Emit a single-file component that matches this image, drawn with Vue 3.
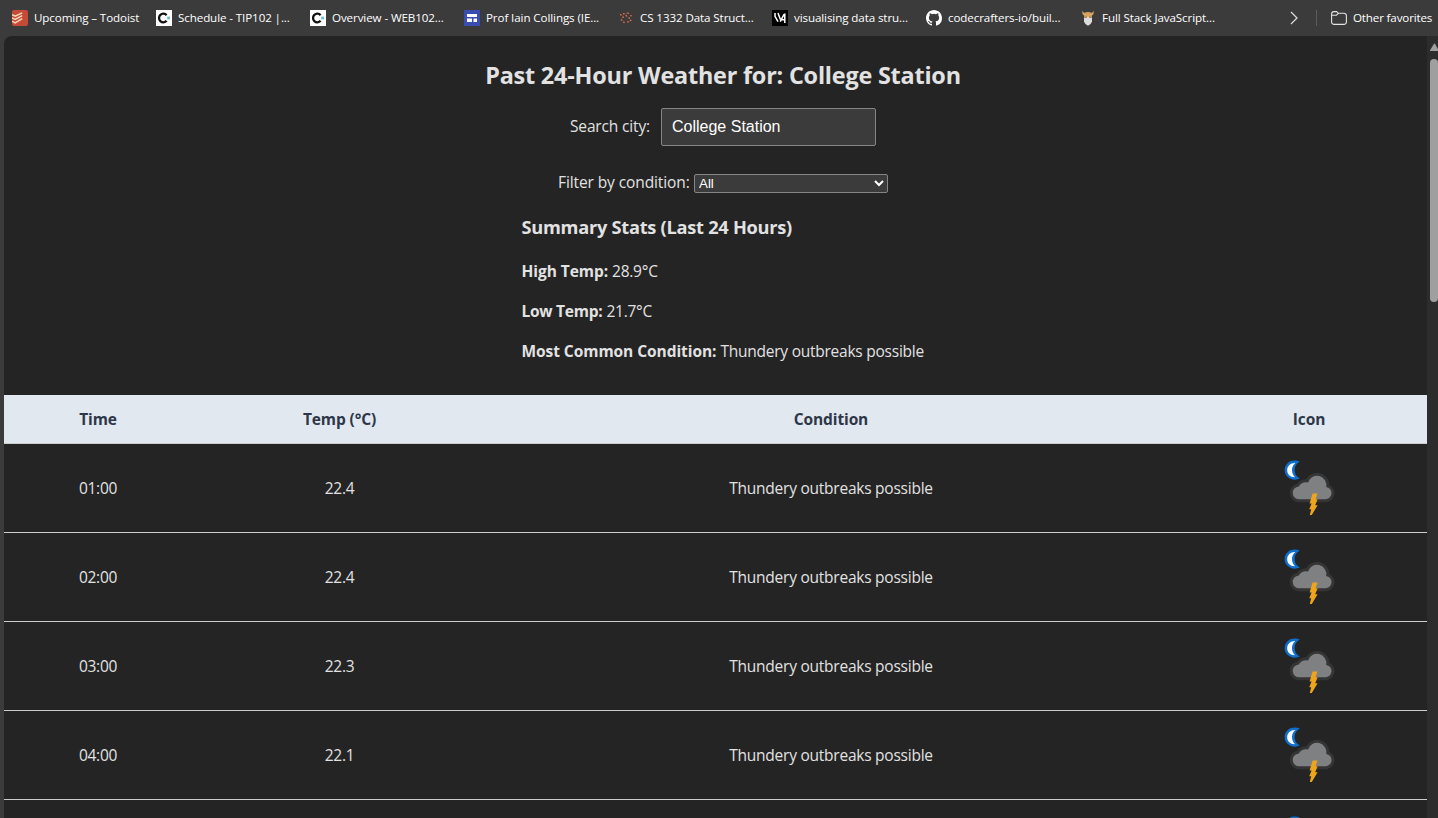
<script setup>
import { ref } from 'vue'

const bookmarks = [
  { icon: 'todoist', label: 'Upcoming – Todoist' },
  { icon: 'codepath', label: 'Schedule - TIP102 |...' },
  { icon: 'codepath', label: 'Overview - WEB102...' },
  { icon: 'sites', label: 'Prof Iain Collings (IE...' },
  { icon: 'dots', label: 'CS 1332 Data Struct...' },
  { icon: 'visualgo', label: 'visualising data stru...' },
  { icon: 'github', label: 'codecrafters-io/buil...' },
  { icon: 'viking', label: 'Full Stack JavaScript...' },
]
const city = ref('College Station')
const condition = ref('All')
const outlook = 'Thundery outbreaks possible'
const hours = [
  { time: '01:00', temp: '22.4', outlook },
  { time: '02:00', temp: '22.4', outlook },
  { time: '03:00', temp: '22.3', outlook },
  { time: '04:00', temp: '22.1', outlook },
  { time: '', temp: '', outlook: '' },
]
const stats = [
  { name: 'High Temp:', value: '28.9°C', key: 'high' },
  { name: 'Low Temp:', value: '21.7°C', key: 'low' },
  { name: 'Most Common Condition:', value: outlook, key: 'common' },
]
</script>

<template>
  <div class="window">
    <nav class="bookmarks">
      <div v-for="b in bookmarks" :key="b.label" class="bookmark" :class="b.icon">
        <svg v-if="b.icon === 'todoist'" viewBox="0 0 16 16">
          <rect width="16" height="16" rx="2" fill="#c74a38" />
          <path d="M0 4.6 3.2 6.2 10.2 2.8M0 7.9 3.2 9.5 10.2 5.6M0 11.2 3.2 12.8 10.2 8.6" fill="none" stroke="#f3d9b8" stroke-width="1.5" />
        </svg>
        <svg v-else-if="b.icon === 'codepath'" viewBox="0 0 16 16">
          <rect width="16" height="16" fill="#fff" />
          <path d="M10.6 5.2A4.3 4.3 0 1 0 10.6 10.8" fill="none" stroke="#111" stroke-width="2.3" />
          <rect x="11.2" y="6.6" width="2.8" height="2.8" fill="#70bde0" />
        </svg>
        <svg v-else-if="b.icon === 'sites'" viewBox="0 0 16 16">
          <rect width="16" height="16" fill="#3a4db0" />
          <path d="M3 4h10v3H3zM3 8.5h5V12H3zM9.5 8.5H13V12H9.5z" fill="#fff" />
        </svg>
        <svg v-else-if="b.icon === 'dots'" viewBox="0 0 16 16">
          <path d="M3 5 6 7M8 6l3 2M4 10l2 2M10 12l3-2M6 4l4-1" stroke="#7b4a43" stroke-width=".9" />
          <g fill="#e0714f">
            <rect x="5" y="3" width="1.4" height="1.4" /><rect x="9.5" y="2.6" width="1.4" height="1.4" />
            <rect x="2" y="4" width="1.4" height="1.4" /><rect x="12.2" y="5" width="1.4" height="1.4" />
            <rect x="4.4" y="6.6" width="1.4" height="1.4" /><rect x="7.6" y="5" width="1.4" height="1.4" />
            <rect x="10.6" y="7.4" width="1.4" height="1.4" /><rect x="2.8" y="9.2" width="1.4" height="1.4" />
            <rect x="12" y="9.8" width="1.4" height="1.4" /><rect x="5.3" y="11.7" width="1.4" height="1.4" />
            <rect x="9.2" y="11.2" width="1.4" height="1.4" />
          </g>
        </svg>
        <svg v-else-if="b.icon === 'visualgo'" viewBox="0 0 16 16">
          <rect width="16" height="16" fill="#000" />
          <path d="M3 3v3.4L6 11.6M6 3 8.4 9.4M8.2 11.6 12.2 4.2M12.8 3.4V13M9.6 9.8h3" fill="none" stroke="#fff" stroke-width="1.5" />
        </svg>
        <svg v-else-if="b.icon === 'github'" viewBox="0 0 16 16">
          <path fill="#fff" d="M8 0C3.58 0 0 3.58 0 8c0 3.54 2.29 6.53 5.47 7.59.4.07.55-.17.55-.38 0-.19-.01-.82-.01-1.49-2.01.37-2.53-.49-2.69-.94-.09-.23-.48-.94-.82-1.13-.28-.15-.68-.52-.01-.53.63-.01 1.08.58 1.23.82.72 1.21 1.87.87 2.33.66.07-.52.28-.87.51-1.07-1.78-.2-3.64-.89-3.64-3.95 0-.87.31-1.59.82-2.15-.08-.2-.36-1.02.08-2.12 0 0 .67-.21 2.2.82a7.6 7.6 0 0 1 4 0c1.53-1.04 2.2-.82 2.2-.82.44 1.1.16 1.92.08 2.12.51.56.82 1.27.82 2.15 0 3.07-1.87 3.75-3.65 3.95.29.25.54.73.54 1.48 0 1.07-.01 1.93-.01 2.2 0 .21.15.46.55.38A8.01 8.01 0 0 0 16 8c0-4.42-3.58-8-8-8z" />
        </svg>
        <svg v-else viewBox="0 0 16 16">
          <path d="M2.6.6Q2.8 2.8 4.6 2.8 8 1.2 11.4 2.8 13.2 2.8 13.4.6 14.4 4.4 12 5.6L11.6 8.6H4.4L4 5.6Q1.6 4.4 2.6.6z" fill="#d7a35c" />
          <path d="M4 8 8 6.6l4 1.4v3.6Q11 15 8 15.8 5 15 4 11.6z" fill="#dcdcdc" />
          <path d="M5.4 6.6h1.3v1.3H5.4zM9.3 6.6h1.3v1.3H9.3z" fill="#8a5c36" />
        </svg>
        <span>{{ b.label }}</span>
      </div>
      <svg class="more" viewBox="0 0 8 14"><path d="M1 1l6 6-6 6" fill="none" stroke="#d8d8d8" stroke-width="1.3" /></svg>
      <i class="divider"></i>
      <svg class="folder" viewBox="0 0 16 16">
        <path d="M.6 4A2.4 2.4 0 0 1 3 1.6h2.6L7.4 3.3H13A2.4 2.4 0 0 1 15.4 5.7V12A2.4 2.4 0 0 1 13 14.4H3A2.4 2.4 0 0 1 .6 12zM.8 5.2H5.4L7.4 3.3" fill="none" stroke="#e4e4e4" stroke-width="1.1" />
      </svg>
      <span class="other">Other favorites</span>
    </nav>

    <div class="viewport">
      <main class="page">
        <div class="content">
          <h2>Past 24-Hour Weather for: {{ city }}</h2>
          <div class="search">
            <label for="city">Search city:</label>
            <input id="city" v-model="city" type="text" />
          </div>
          <div class="filter">
            <label for="condition">Filter by condition:</label>
            <select id="condition" v-model="condition"><option>All</option></select>
          </div>
          <section class="summary">
            <h3>Summary Stats (Last 24 Hours)</h3>
            <p v-for="s in stats" :key="s.key" :class="s.key"><strong>{{ s.name }}</strong><span>{{ s.value }}</span></p>
          </section>
          <table>
            <colgroup><col class="c1" /><col class="c2" /><col class="c3" /><col class="c4" /></colgroup>
            <thead>
              <tr><th>Time</th><th>Temp (°C)</th><th>Condition</th><th>Icon</th></tr>
            </thead>
            <tbody>
              <tr v-for="(h, i) in hours" :key="i">
                <td class="num">{{ h.time }}</td>
                <td class="num">{{ h.temp }}</td>
                <td>{{ h.outlook }}</td>
                <td>
                  <svg class="weather" viewBox="0 0 64 64">
                    <path d="M22.8 5.6C18.6 3.9 14 4.3 10.8 7 6.8 10.4 6.7 17 10.2 20.6 13.2 23.9 18.4 24.7 22.8 22.6 19 20.2 17.6 17.4 17.6 14 17.6 10.6 19.2 7.8 22.8 5.6z" fill="#0f6fd0" />
                    <path d="M18.4 7C13.6 6.8 10.2 10 10.2 14.2 10.2 18.4 13.4 21.4 18 21.2 15.8 19 15 16.8 15 14 15 11.4 16 9 18.4 7z" fill="#fff" />
                    <path d="M22.6 43.3A6.4 6.4 0 0 1 21.8 30.4 9.2 9.2 0 0 1 31 26.4 9.4 9.4 0 0 1 49.2 31 6.2 6.2 0 0 1 49 43.3z" fill="#7f8082" stroke="#353536" stroke-width="6" stroke-linejoin="round" paint-order="stroke" />
                    <path d="M35.6 37.6H40.4L38.6 43.2H40.6L38.2 49.2H40.6L34.8 59H32.8L34.2 53.2H32.2L34.6 47.6H32.6z" fill="#efa51b" />
                  </svg>
                </td>
              </tr>
            </tbody>
          </table>
        </div>
      </main>
      <div class="scrollbar">
        <svg viewBox="0 0 8 8"><path d="M0 7.2 4 .8Q4.5 0 5 .8L9 8H.6Q-.2 8 0 7.2z" fill="#9f9f9f" /></svg>
        <div class="thumb"></div>
      </div>
    </div>
  </div>
</template>

<style>
body { overflow: hidden; background: #3b3b3b; }
</style>

<style scoped>
* { box-sizing: border-box; }
.window {
  display: flex;
  flex-direction: column;
  width: 1438px;
  height: 818px;
  overflow: hidden;
  background: #3b3b3b;
  color: #e2e2e2;
  color-scheme: dark;
  font: 15.5px/24px "Open Sans", "Noto Sans", sans-serif;
  letter-spacing: -0.24px;
}
.bookmarks {
  display: flex;
  align-items: center;
  flex: 0 0 36px;
  padding-left: 12px;
  color: #fff;
  font-size: 11.6px;
  letter-spacing: -0.1px;
  line-height: 16px;
  white-space: nowrap;
}
.bookmark { display: flex; gap: 6px; flex: 0 0 154px; }
.bookmark.todoist { flex-basis: 144px; }
.bookmark svg, .folder { flex: none; width: 16px; height: 16px; }
.more { width: 8px; height: 14px; margin-left: 56px; }
.divider { width: 1px; height: 16px; margin: 0 14px 0 18px; background: #5c5c5c; }
.other { margin-left: 6px; letter-spacing: -0.15px; }

.viewport {
  display: flex;
  flex: 1;
  min-height: 0;
  margin-left: 4px;
  overflow: hidden;
  border-radius: 8px 0 0 0;
  background: #242424;
}
.page { flex: 0 0 1423px; overflow: hidden; }
.content { display: flex; flex-direction: column; align-items: center; width: 1438px; }
h2 {
  margin: 21px 0 0;
  font-size: 23.4px;
  line-height: 36px;
  letter-spacing: -0.2px;
}
.search { display: flex; align-items: center; margin-top: 15px; }
.search label { width: 91px; padding-bottom: 2px; letter-spacing: -0.15px; }
input {
  width: 215px;
  height: 38px;
  padding: 0 9px 0 10px;
  border: 1px solid #858585;
  border-radius: 2px;
  background: #3b3b3b;
  color: #fff;
  font: 16px "Liberation Sans", Arial, sans-serif;
}
.filter { display: flex; align-items: center; height: 24px; margin-top: 25px; }
.filter label { width: 136px; padding-bottom: 2px; letter-spacing: -0.1px; }
select {
  width: 194px;
  height: 19px;
  border: 1px solid #858585;
  border-radius: 2px;
  background: #3b3b3b;
  color: #fff;
  font: 13.333px "Liberation Sans", Arial, sans-serif;
}
.summary { width: 403px; margin-top: 19px; white-space: nowrap; }
h3 { margin: 0 0 19px; font-size: 18.2px; line-height: 26px; letter-spacing: -0.25px; }
p { display: flex; gap: 4px; margin: 0 0 16px; }
strong { letter-spacing: -0.06px; }
.low strong { letter-spacing: -0.26px; }
table {
  width: 1439px;
  margin-top: 16px;
  align-self: flex-start;
  border-collapse: separate;
  border-spacing: 0;
  table-layout: fixed;
  text-align: center;
}
.c1 { width: 188px; }
.c2 { width: 295px; }
.c3 { width: 688px; }
.c4 { width: 268px; }
th {
  height: 49px;
  padding: 12px;
  border-bottom: 1px solid #ccc;
  background: #e2e8f0;
  color: #2d3748;
  letter-spacing: -0.12px;
}
td { height: 89px; padding: 12px; border-bottom: 1px solid #ccc; }
.num { letter-spacing: -0.28px; }
.weather { display: block; width: 64px; height: 64px; margin: 0 auto; }

.scrollbar { flex: 1; padding: 7px 0 0 3px; background: #2c2c2c; }
.scrollbar svg { display: block; width: 8px; height: 8px; }
.thumb { width: 8px; height: 243px; margin-top: 8px; border-radius: 4px; background: #9f9f9f; }
</style>
